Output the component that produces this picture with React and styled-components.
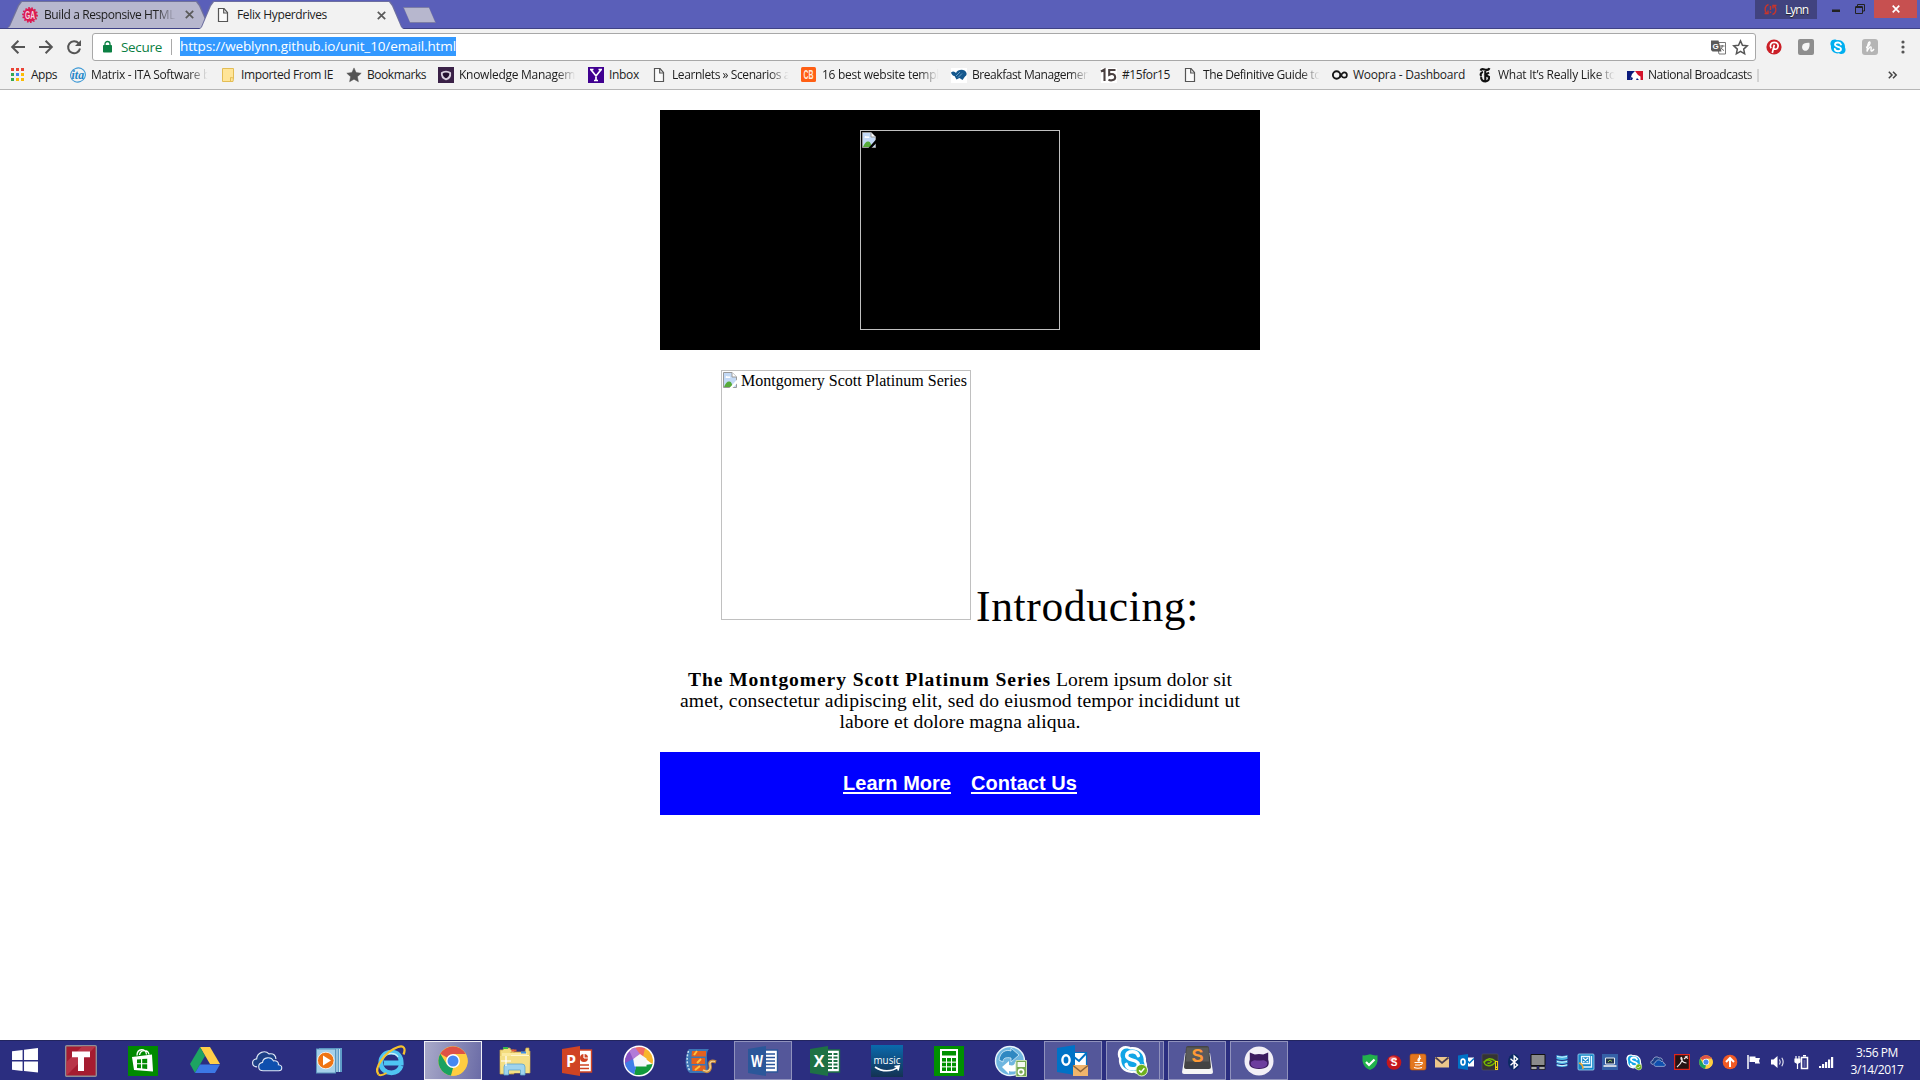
import React, { useLayoutEffect, useRef, useState } from 'react';
import styled, { createGlobalStyle } from 'styled-components';

const Global = createGlobalStyle`
  html, body { margin: 0; padding: 0; background: #fff; }
  * { box-sizing: border-box; }
  svg { display: block; flex: none; overflow: visible; }
`;

const ui = `"Open Sans", "Noto Sans", sans-serif`;
const serif = `"Liberation Serif", serif`;
const sans = `"Liberation Sans", sans-serif`;

const Screen = styled.div`
  width: 1920px;
  height: 1080px;
  display: flex;
  flex-direction: column;
  overflow: hidden;
  background: #fff;
  font-family: ${ui};
  font-size: 12px;
  color: #1c1c1c;
`;

const Run = styled.span`
  display: inline-block;
  white-space: pre;
`;

/* Tracks a line of text in or out until it fills the given width. */
function Fit({ w, children, className }) {
  const ref = useRef(null);
  const [ls, setLs] = useState(0);
  useLayoutEffect(() => {
    const el = ref.current;
    el.style.letterSpacing = '0px';
    const natural = el.getBoundingClientRect().width;
    const v = (w - natural) / Math.max(1, el.textContent.length);
    el.style.letterSpacing = `${v}px`;
    setLs(v);
  }, [w, children]);
  return <Run ref={ref} className={className} style={{ letterSpacing: ls }}>{children}</Run>;
}

/* ---------- tab strip ---------- */
const TabStrip = styled.div`
  height: 29px;
  display: flex;
  align-items: flex-start;
  padding-left: 7px;
  background: #5a5fb9;
  border-bottom: 1px solid #3f4285;
  flex: none;
`;

const Tab = styled.div`
  width: ${p => p.$w}px;
  height: ${p => (p.$active ? 28 : 27)}px;
  margin: 1px 0 -1px ${p => (p.$active ? -12 : 0)}px;
  padding-left: ${p => (p.$active ? 16 : 15)}px;
  display: flex;
  align-items: center;
  position: relative;
  z-index: ${p => (p.$active ? 2 : 1)};
  &::before, &::after {
    content: '';
    position: absolute;
    inset: 0;
    z-index: -1;
    clip-path: polygon(0 100%, 2px 93%, 11px 4px, 14px 0, calc(100% - 14px) 0, calc(100% - 11px) 4px, calc(100% - 2px) 93%, 100% 100%);
    background: ${p => (p.$active ? '#6d6fa0' : '#70719a')};
  }
  &::after {
    inset: 1px 1px 0 1px;
    background: ${p => (p.$active ? '#f2f2f2' : '#b7b7ce')};
  }
`;

const TabTitle = styled.div`
  width: ${p => p.$w}px;
  margin-left: ${p => p.$gap}px;
  line-height: 18px;
  ${p => p.$fade && 'mask-image: linear-gradient(90deg, #000 84%, transparent);'}
`;

const TabClose = styled.div`
  margin-left: ${p => p.$gap}px;
`;

const NewTab = styled.div`
  width: 33px;
  height: 16px;
  margin: 7px 0 0 -1px;
  background: #7c7da6;
  clip-path: polygon(0 0, 26px 0, 33px 100%, 7px 100%);
  &::after {
    content: '';
    display: block;
    width: 31px;
    height: 14px;
    margin: 0;
    transform: translate(1px, 1px);
    background: #b7b7ce;
    clip-path: polygon(0 0, 25px 0, 31px 100%, 6px 100%);
  }
`;

const WindowButtons = styled.div`
  margin-left: auto;
  padding-right: 3px;
  display: flex;
  height: 19px;
`;

const User = styled.div`
  width: 62px;
  height: 19px;
  background: #41437f;
  color: #fff;
  display: flex;
  align-items: center;
  padding-left: 9px;
  gap: 8px;
  line-height: 19px;
  text-shadow: 0 1px 1px #222;
`;

const WinButton = styled.div`
  width: ${p => p.$w}px;
  height: 18px;
  display: flex;
  align-items: center;
  justify-content: center;
  background: ${p => (p.$close ? '#c75050' : 'transparent')};
`;

const RestoreButton = styled(WinButton)`
  justify-content: flex-start;
`;

/* ---------- toolbar ---------- */
const Toolbar = styled.div`
  height: 33px;
  flex: none;
  display: flex;
  align-items: center;
  padding: 3px 0 0 11px;
  background: #f2f2f2;
`;

const NavIcons = styled.div`
  display: flex;
  gap: 14px;
  width: 81px;
`;

const Omnibox = styled.div`
  width: 1664px;
  height: 28px;
  border: 1px solid #a8a8a8;
  border-radius: 3px;
  background: #fff;
  display: flex;
  align-items: center;
  padding: 0 7px 0 10px;
  font-size: 13.5px;
`;

const Secure = styled.div`
  color: #0b8043;
  margin-left: 9px;
  line-height: 20px;
  padding-bottom: 1px;
`;

const Separator = styled.div`
  width: 1px;
  height: 16px;
  background: #a9a9a9;
  margin: 0 8px 0 9px;
`;

const Url = styled.div`
  height: 19px;
  line-height: 19px;
  margin-bottom: 1px;
  background: #3399ff;
  color: #fff;
  width: 276px;
`;

const OmniIcons = styled.div`
  margin-left: auto;
  display: flex;
  align-items: center;
  gap: 7px;
`;

const Extensions = styled.div`
  display: flex;
  align-items: center;
  gap: 16px;
  padding-left: 10px;
`;

const MenuButton = styled.div`
  padding-left: 7px;
`;

/* ---------- bookmarks ---------- */
const Bookmarks = styled.div`
  height: 28px;
  flex: none;
  display: flex;
  align-items: center;
  padding: 0 0 1px 10px;
  background: #f2f2f2;
  border-bottom: 1px solid #b6b6b6;
`;

const Bookmark = styled.div`
  width: ${p => p.$w}px;
  display: flex;
  align-items: center;
  gap: 5px;
`;

const BookmarkLabel = styled.div`
  width: ${p => p.$w - 31}px;
  line-height: 19px;
  padding-bottom: 1px;
  white-space: pre;
  ${p => p.$fade && 'mask-image: linear-gradient(90deg, #000 82%, transparent 98%);'}
`;

const Overflow = styled.div`
  margin-left: auto;
  padding-right: 23px;
`;

/* ---------- page ---------- */
const Page = styled.main`
  flex: 1;
  padding-top: 20px;
  display: flex;
  flex-direction: column;
  align-items: center;
  color: #000;
  font-family: ${serif};
`;

const Masthead = styled.header`
  width: 600px;
  height: 240px;
  background: #000;
  display: flex;
  justify-content: center;
  padding-top: 20px;
`;

const MissingImage = styled.div`
  width: ${p => p.$size}px;
  height: ${p => p.$size}px;
  border: 1px solid silver;
  padding: 1px;
  display: flex;
  align-items: flex-start;
  gap: 2px;
  font-size: 16px;
  line-height: 18px;
  flex: none;
`;

const Hero = styled.section`
  width: 600px;
  height: 250px;
  margin-top: 20px;
  padding-left: 61px;
  display: flex;
  align-items: flex-end;
  gap: 5px;
`;

const HeroTitle = styled.div`
  font-size: 43.5px;
  line-height: 46px;
  margin-bottom: -9px;
`;

const Copy = styled.section`
  margin-top: 49px;
  font-size: 19.6px;
  line-height: 21px;
`;

const CopyLine = styled.div`
  height: 21px;
  display: flex;
  justify-content: center;
  gap: 5px;
`;

const Footer = styled.footer`
  width: 600px;
  height: 63px;
  margin-top: 20px;
  background: #00f;
  display: flex;
  justify-content: center;
  align-items: center;
  gap: 20px;
`;

const FooterLink = styled.a`
  color: #fff;
  font: bold 20px/23px ${sans};
  & > span { text-decoration: underline; text-decoration-thickness: 2px; text-underline-offset: 2px; text-decoration-skip-ink: none; }
`;

/* ---------- taskbar ---------- */
const Taskbar = styled.div`
  height: 40px;
  flex: none;
  display: flex;
  background: #2b2e80;
  border-top: 1px solid #22255f;
`;

const StartButton = styled.div`
  width: 52px;
  display: flex;
  align-items: center;
  padding-left: 12px;
`;

const Apps = styled.div`
  display: flex;
  gap: 4px;
`;

const AppCell = styled.div`
  width: 58px;
  height: 39px;
  display: flex;
  align-items: center;
  justify-content: center;
  border: 1px solid ${p => (p.$state === 'active' ? '#f0f0f6' : p.$state === 'open' ? '#9092bd' : 'transparent')};
  background: ${p => (p.$state === 'active' ? 'linear-gradient(100deg, #a9aac9, #6a6ba6)' : p.$state === 'open' ? '#54579a' : 'transparent')};
  ${p => p.$stack && 'box-shadow: inset -3px 0 0 #54579a, inset -4px 0 0 #9092bd; padding-right: 5px;'}
`;

const Tray = styled.div`
  margin-left: auto;
  display: flex;
  align-items: center;
  gap: 8px;
  padding-top: 2px;
`;

const Clock = styled.div`
  width: 86px;
  display: flex;
  flex-direction: column;
  align-items: center;
  color: #fff;
  line-height: 17px;
  padding-top: 3px;
  font-size: 12px;
`;

/* ---------- icons ---------- */
const Svg = ({ w = 16, h, vb, children }) => (
  <svg width={w} height={h || w} viewBox={vb || `0 0 ${w} ${h || w}`} fill="none">{children}</svg>
);

const Letter = ({ x, y, s, c = '#fff', f = sans, weight = 700, style, children, tl }) => (
  <text x={x} y={y} fontSize={s} fill={c} fontFamily={f} fontWeight={weight} fontStyle={style} textAnchor="middle" textLength={tl} lengthAdjust="spacingAndGlyphs">{children}</text>
);

const FileIcon = () => (
  <Svg w={16}>
    <path d="M3.500 1.500h5.500l3.500 4v9h-9z" fill="#fafafa" stroke="#555" strokeWidth="1.200" />
    <path d="M8.700 1.500V6h4" stroke="#555" strokeWidth="1.200" />
  </Svg>
);

const CloseIcon = ({ c = '#5a5a5a', s = 9, sw = 1.7 }) => (
  <Svg w={s} vb="0 0 9 9"><path d="M.8.8l7.400 7.400M8.200.8L.8 8.200" stroke={c} strokeWidth={sw} /></Svg>
);

const GaIcon = () => (
  <Svg>
    <circle cx="8" cy="8" r="6.700" fill="#db1a52" />
    <circle cx="8" cy="8" r="7" stroke="#db1a52" strokeWidth="1.800" strokeDasharray="1.6 1.5" />
    <Letter x={8} y={11.900} s={11} tl={10}  c="#f1d4e0">GA</Letter>
  </Svg>
);

const BrokenIcon = () => (
  <Svg>
    <path d="M.5.5h8.500l4.500 4.500v10.500H.5z" fill="#c3d9f5" />
    <path d="M2.500 5.500c0-2 2-2 2.500-.8 1.500-1 2.800.3 2.300 1.300H3z" fill="#fff" />
    <path d="M1 15c1.500-4 3.500-6 5.500-5.500 2 .5 2.500 2 3 5.500z" fill="#56ab3a" />
    <path d="M.5.5h8.500l4.500 4.500v10.500H.5z" stroke="#9a9a9a" />
    <path d="M9 .5v4.500h4.500" fill="#fff" stroke="#9a9a9a" />
    <path d="M6 16.500L14.500 7v4L9 16.500z" fill="currentColor" />
  </Svg>
);

const BrokenDark = styled.div`color: #000;`;
const BrokenLight = styled.div`color: #fff;`;

const BackIcon = ({ flip }) => (
  <Svg w={14}>
    <path d={flip ? 'M0 7h12.500M6.600.8L12.800 7l-6.200 6.200' : 'M14 7H1.500M7.400.8L1.200 7l6.200 6.200'} stroke="#555" strokeWidth="2" />
  </Svg>
);

const ReloadIcon = () => (
  <Svg w={14}>
    <path d="M11.700 3.300A6 6 0 1 0 13 8.500" stroke="#555" strokeWidth="2" />
    <path d="M14 0v6H8z" fill="#555" />
  </Svg>
);

const LockIcon = () => (
  <Svg w={9} h={12}>
    <rect x="0" y="4" width="9" height="7.500" rx=".8" fill="#0b8043" />
    <path d="M2 4.500V3a2.500 2.500 0 0 1 5 0v1.500" stroke="#0b8043" strokeWidth="1.300" />
  </Svg>
);

const TranslateIcon = () => (
  <Svg w={15}>
    <path d="M5.500 2.500h9v11.500H8z" fill="#fff" stroke="#777" />
    <path d="M0 .5h7.500l3 11H1.500L0 10z" fill="#5a5a5a" />
    <Letter x={4.600} y={9} s={8} c="#fff">G</Letter>
    <path d="M9 6h4.500M11.200 5v1c0 2-1 3.500-2 4M10 7.500c.5 1.500 1.500 2.300 3 3" stroke="#666" />
  </Svg>
);

const StarIcon = ({ fill, s = 14 }) => (
  <Svg w={s} vb="0 0 16 16">
    <path d="M8 .9l2.100 4.700 5.100.6-3.800 3.500 1 5L8 12.200l-4.400 2.500 1-5L.8 6.200l5.100-.6z" fill={fill ? '#555' : 'none'} stroke="#555" strokeWidth={fill ? 0.5 : 1.600} />
  </Svg>
);

const PinterestIcon = () => (
  <Svg>
    <circle cx="8" cy="8" r="7.600" fill="#cb1f27" />
    <path d="M5.100 9.200C3.200 6.500 5 3.300 8.300 3.300c3.600 0 4.600 3.200 3.300 5.600-1 1.700-2.900 1.700-3.500.6M8.300 5.800L6.300 14" stroke="#fff" strokeWidth="1.700" />
  </Svg>
);

const GreyExtIcon = () => (
  <Svg>
    <rect width="16" height="16" rx="2" fill="#8e8e8e" />
    <path d="M4.200 7c.5-2.500 3-3.500 7.200-3.300.7 3.300-.4 7-3 8C6 12.500 3.500 10.200 4.200 7z" fill="#f5f5f5" />
  </Svg>
);

const SkypeBlob = ({ w = 16, badge, white }) => (
  <Svg w={w} vb="0 0 32 32">
    <path d="M9 1c3 0 4 .8 5 1.300C23 1 31 8 30 17c3 6-.5 13-7 13-2.500 0-4-.7-5.500-1.400C8 30 1 23 2 14-1 8 2 1 9 1z" fill={white ? '#fff' : '#00aff0'} />
    {white && <path d="M9.500 3.500c2.500 0 3.500.7 4.500 1.200C22 3.500 28.500 9.500 27.500 17c2.500 5-.5 10.500-5 10.500-2 0-3-.5-4.500-1.200C10 27.500 3.500 22 4.500 14 2 9 5 3.500 9.500 3.500z" fill="#12a5e6" />}
    <path d="M22 11c-1-3-3.500-4-6-4-3.500 0-6 1.500-6 4.200 0 5.800 12 3 12 8.800 0 3-2.500 4.500-6 4.500s-6-1.500-6.500-4.500" stroke="#fff" strokeWidth="3.600" strokeLinecap="round" />
    {badge && <><circle cx="25.500" cy="26" r="6" fill="#6eb01d" stroke="#e8f5d8" /><path d="M22.800 26l2 2 3.500-4" stroke="#fff" strokeWidth="1.500" /></>}
  </Svg>
);

const HoneyIcon = () => (
  <Svg>
    <rect width="16" height="16" rx="3" fill="#b5b5b5" />
    <path d="M4 8.500c3-1 5-5 3.500-5.500-1.500-.3-2 5-2.500 9.500 1-3 3-5 4-4.500.8.500-.8 3.500.3 4 .8.300 1.700-.5 2.700-2" stroke="#fff" strokeWidth="1.400" />
  </Svg>
);

const DotsIcon = () => (
  <Svg w={4} h={14}><circle cx="2" cy="2" r="1.600" fill="#555" /><circle cx="2" cy="7" r="1.600" fill="#555" /><circle cx="2" cy="12" r="1.600" fill="#555" /></Svg>
);

const AppsIcon = () => {
  const c = ['#ea4335', '#ea4335', '#ea4335', '#34a853', '#4285f4', '#fbbc05', '#34a853', '#fbbc05', '#fbbc05'];
  return <Svg>{c.map((f, i) => <rect key={i} x={1 + (i % 3) * 5} y={1 + Math.floor(i / 3) * 5} width="3" height="3" fill={f} />)}</Svg>;
};

const ItaIcon = () => (
  <Svg>
    <ellipse cx="8" cy="8" rx="7.500" ry="7" stroke="#3f9ad6" strokeWidth="1.100" transform="rotate(-20 8 8)" />
    <Letter x={7.800} y={11.500} s={11.500} tl={12.500} c="#2385c8" f={serif} style="italic">ita</Letter>
  </Svg>
);

const FolderIcon = () => (
  <Svg><path d="M2.500 1.500h11v9.500l-.5 3.500H2.500z" fill="#ffe598" stroke="#e3bd55" /><path d="M10.500 14.500v-4l3 .5" stroke="#e3bd55" /></Svg>
);

const KnowledgeIcon = () => (
  <Svg>
    <rect width="16" height="16" fill="#3a2147" />
    <path d="M3.800 6C6 4.200 10 4.200 12.200 6c.3 2.500-1 5.300-4.200 6.300C4.800 11.200 3.600 8.500 3.800 6z" fill="#241030" stroke="#d9d0df" strokeWidth="1.800" strokeLinejoin="round" />
  </Svg>
);

const YahooIcon = () => (
  <Svg>
    <rect width="16" height="16" fill="#400090" />
    <path d="M3 2.800L8 9l5-6.200M8 8.500v4.800M2 2.500h3.500M10.500 2.500H14M6 13.500h4" stroke="#fff" strokeWidth="1.700" />
  </Svg>
);

const CbIcon = () => (
  <Svg><rect width="15" height="15" rx="1.500" fill="#ff5f14" /><Letter x={7.500} y={11.700} s={12} tl={10} c="#ffe9dc">CB</Letter></Svg>
);

const BmaIcon = () => (
  <Svg>
    <rect width="16" height="15" y="1" fill="#fff" />
    <path d="M0 5.500c2-2 4-1 5 .5C6 3 11 2 13.500 3.500c3 2 2.500 5 .5 6L11.500 13l-3-2-3 1.500L3.500 9C1.500 9 .5 7 0 5.500z" fill="#14578d" />
    <path d="M5 9l4-4M7 10.500l4-4" stroke="#7fb0d4" strokeWidth=".8" />
  </Svg>
);

const FifteenIcon = () => (
  <Svg><rect width="16" height="15" y="1" fill="#fff" /><path d="M0 4.500l3.500-2V14M14.500 3H8.200v4.800c3-1.600 6-.5 6 2.400s-4 4-6.700 2.500" stroke="#4a4040" strokeWidth="2.100" /></Svg>
);

const WoopraIcon = () => (
  <Svg><circle cx="4.600" cy="8" r="3.700" stroke="#161616" strokeWidth="1.900" /><path d="M7.500 10.500C9 9.500 9.500 5.300 12.200 5.300c3.600 0 3.600 5.400 0 5.400-1.500 0-2.500-1.500-3-2.700" stroke="#161616" strokeWidth="1.700" /></Svg>
);

const NytIcon = () => (
  <Svg>
    <path d="M3.500 3.600C4.500.8 7 2.600 9 2.900c2 .1 3-.4 3.400-1.800M8.300 4v10M6 5C3.300 5.600 3 8.300 4.800 8.800M4.200 10c-.5 3 2 4.500 4.300 4.500 2.500-.3 3.800-2 3.500-4.500L8.500 8 12 5.500" stroke="#111" strokeWidth="2.100" />
  </Svg>
);

const MlbIcon = () => (
  <Svg>
    <rect y="4" width="16" height="9" fill="#fff" />
    <path d="M0 4h8L5 7l-2 6H0z" fill="#0b1a7c" /><path d="M8 4h8v9h-2.500V9.500L11 8z" fill="#d3132b" />
    <path d="M3 13l1-3 2 1-1 2zM9 13l1-2 2 2z" fill="#0b1a7c" />
  </Svg>
);

const SyncAlert = () => (
  <Svg w={13}>
    <path d="M4.500 1.500C1 2.500 0 7 2.500 10M0.500 10.500H4V7.500M8.500 11.500C12 10.500 13 6 10.500 3M12.500 2.500H9v3" stroke="#c9352b" strokeWidth="1.400" />
    <path d="M6.500 3v4M6.500 8.500V10" stroke="#c9352b" strokeWidth="1.400" />
  </Svg>
);

const StartIcon = () => (
  <Svg w={26} h={25} vb="0 0 27 26">
    <path d="M0 3.500l11-1.500v10.500H0zM12.500 1.800L27 0v12.500H12.500zM0 14h11v10L0 22.500zM12.500 14H27v11.500L12.500 24z" fill="#fff" />
  </Svg>
);

const TIcon = () => (
  <Svg w={32}>
    <rect x=".7" y=".7" width="30.600" height="30.600" rx="1" fill="#a51c30" stroke="#8e8e96" strokeWidth="1.400" />
    <path d="M1.500 30.500V17L17 1.500h13.500z" fill="#b93548" />
    <path d="M7 6.500h18v5.800h-6V26h-6V12.300H7z" fill="#fff" />
  </Svg>
);

const StoreIcon = () => (
  <Svg w={30}>
    <rect width="30" height="30" fill="#008a00" />
    <path d="M4 11l20-2.500 1 17L6 24z" fill="#fff" />
    <path d="M9 9.500C9 2 18 2 18.500 8.500M11.500 9C12.500 3.500 20 3 21 8.500" stroke="#fff" strokeWidth="1.300" />
    <path d="M9 13.500l4-.3v4H9zM14.200 13.100l5-.4v4.500h-5zM9 18.300h4v4l-4-.3zM14.200 18.300h5v4.700l-5-.4z" fill="#008a00" />
  </Svg>
);

const DriveIcon = () => (
  <Svg w={30} h={27}>
    <path d="M10 0h10l10 17H20z" fill="#ffcf48" /><path d="M10 0l5 9L5 26 0 17z" fill="#1da462" /><path d="M10 17.500h20L25 26H5z" fill="#3c78e6" />
  </Svg>
);

const CloudIcon = ({ w = 32 }) => (
  <Svg w={w} h={w * 0.68} vb="0 0 32 22">
    <path d="M6 17C0 17 0 9.500 5.500 9 6 2.500 14-.5 18 4c5-1 7 2 7 5" stroke="#dfe7f5" strokeWidth="1.200" fill="#1c3f86" />
    <path d="M12 21c-5.500 0-6-7.500-.5-8.500C12 7.500 20 6 22.500 11c4-.5 5.500 2 5 4 5 .5 4 6 .5 6z" fill="#0e4fae" stroke="#dfe7f5" strokeWidth="1.100" />
  </Svg>
);

const MediaIcon = () => (
  <Svg w={26}>
    <path d="M3 0h23v24H3z" fill="#5f9dc8" /><path d="M23.500 1v23M21 1v23" stroke="#d5ecf8" strokeWidth=".9" />
    <rect x=".5" y="1" width="19" height="24" fill="#a4d0ea" stroke="#5b94bb" />
    <circle cx="9.800" cy="12.500" r="8.300" fill="#ef7413" stroke="#fff" strokeWidth=".8" /><path d="M7 7.500l8 5-8 5z" fill="#fff" />
  </Svg>
);

const IeIcon = () => (
  <Svg w={30}>
    <path d="M8 17h12.500M25.200 19.800C23.500 24.500 20 26.800 15.500 26.800 9 26.800 4.800 22.500 4.800 16.500S9 6.200 15.500 6.200c6 0 9.700 4.300 9.700 10.800H9" stroke="#4fc4f2" strokeWidth="4.800" />
    <path d="M7 12c2-5 12-6.500 15-1" stroke="#c9effc" strokeWidth="1.500" />
    <path d="M2.500 28.500C-3 22 10 5 22 1c6-2 8 1.500 5.500 7.500" stroke="#f6c22d" strokeWidth="2.200" />
    <path d="M2.500 28.500c2 1.500 5.500 0 8-1.500" stroke="#f6c22d" strokeWidth="2" />
  </Svg>
);

const ChromeIcon = ({ w = 30 }) => (
  <Svg w={w} vb="0 0 30 30">
    <circle cx="15" cy="15" r="14.700" fill="#ffcd40" />
    <path d="M15 15L2.300 7.700A14.700 14.700 0 0 1 27.700 8H15z" fill="#de5246" />
    <path d="M2.300 7.700l6.600 10.800L15 22l-2 7.600A14.700 14.700 0 0 1 2.300 7.700z" fill="#1aa260" />
    <path d="M27.700 8H15l6 10.500-8 11A14.700 14.700 0 0 0 27.700 8z" fill="#ffcd40" />
    <circle cx="15" cy="15" r="6.900" fill="#fff" /><circle cx="15" cy="15" r="5.500" fill="#4688f1" />
  </Svg>
);

const ExplorerIcon = () => (
  <Svg w={32} h={30}>
    <path d="M1 4h3l1-2h6l1 2h3V28H1zM12 6h14l1-4h3v3h1v22H12z" fill="#f3dc7e" stroke="#c9a545" strokeWidth=".7" />
    <path d="M3 7h25v20H3z" fill="#fbeaa0" /><path d="M12 9h18v3H12z" fill="#fff7cf" />
    <path d="M4 2h5" stroke="#3bb54a" strokeWidth="2" /><path d="M12.500 4.500h5" stroke="#e05a3a" strokeWidth="2" /><path d="M22 6.500h5" stroke="#3d8ee6" strokeWidth="2" />
    <path d="M1 10h30l-1 17H2z" fill="#f4df86" />
    <path d="M5 29v-8q0-3 3-3h15q3 0 3 3v8h-4.500v-5h-12v5z" fill="#9ed3ee" stroke="#5ea4cc" strokeWidth=".8" />
    <path d="M7 10v10M2 15h10" stroke="#fff" strokeWidth="1.200" />
  </Svg>
);

const OfficeIcon = ({ c, ch, children, tl }) => (
  <Svg w={30}>
    <path d="M15 4h14.500v22H15z" fill="#fff" stroke={c} strokeWidth="1.400" />
    {children}
    <path d="M0 3l18-3v30L0 27z" fill={c} />
    <Letter x={9} y={20.500} s={16} tl={tl} f={ui}>{ch}</Letter>
  </Svg>
);

const PicasaIcon = () => (
  <Svg w={32}>
    <circle cx="16" cy="16" r="15.500" fill="#fff" />
    <path d="M16 16L3 22A14 14 0 0 1 6.500 6z" fill="#8a52c4" />
    <path d="M6.500 6A14 14 0 0 1 22 3.300V13L16 14z" fill="#ef6a66" />
    <path d="M6.500 6A14 14 0 0 1 12 2.600L17 9l-7 5z" fill="#b27ad8" />
    <path d="M22 3.300a14 14 0 0 1 7.600 16L20 12z" fill="#f7b52c" />
    <path d="M29.600 19A14 14 0 0 1 11 29.200L13 21z" fill="#119a3c" />
    <path d="M11 29.200A14 14 0 0 1 2.200 18l8-4 3 8z" fill="#3f7de8" />
    <path d="M17 9l6.500 4.500V21.500H11.500L10.200 14z" fill="#f4f6fa" />
  </Svg>
);

const FilmIcon = () => (
  <Svg w={32} h={26}>
    <path d="M4 1h20c-5 5 1 18-2 24H5C-2 20 1 5 4 1z" fill="#3d75b5" />
    <path d="M3.500 3c-2 6-2 14 1.500 20" stroke="#cde3f4" strokeWidth="1.500" strokeDasharray="2 1.500" />
    <path d="M7 3h14v5.500H6.500zM6.500 10H20v6H6.500zM7 17.500h13.500V23H7.500z" fill="#e4611e" />
    <path d="M9 7l3-4M12 15l4-4M10 22l5-4" stroke="#ffc13c" strokeWidth="2" />
    <path d="M18 22c6 4 8-1 7-5-1-3 1-5 6-3" stroke="#c98a3c" strokeWidth="3.200" /><path d="M18 22c6 3 8-1 7-5-.6-2.500 1-4.500 5-3.500" stroke="#f4d79b" strokeWidth="1.200" />
  </Svg>
);

const MusicIcon = () => (
  <Svg w={32}>
    <defs><linearGradient id="music" x2="0" y2="1"><stop stopColor="#0a6aad" /><stop offset="1" stopColor="#143253" /></linearGradient></defs>
    <rect width="32" height="32" fill="url(#music)" />
    <Letter x={16} y={18.500} s={11} tl={27} f={ui} weight={400}>music</Letter>
    <path d="M4 22c7 5 17 5 23 0M23.500 21.500l4.500-.5-1 4.500" stroke="#fff" strokeWidth="1.600" />
  </Svg>
);

const CalcIcon = () => (
  <Svg w={30}>
    <rect width="30" height="30" fill="#009000" /><rect x="6" y="3" width="18" height="24" fill="#fff" /><rect x="8" y="5" width="14" height="4.500" fill="#009000" />
    {[0, 1, 2].flatMap(r => [0, 1, 2].map(c => <rect key={`${r}${c}`} x={8 + c * 5} y={12 + r * 4.700} width="4" height="3.600" fill="#009000" />))}
  </Svg>
);

const SyncIcon = () => (
  <Svg w={32}>
    <circle cx="15" cy="16" r="14.500" fill="#6fb6e0" stroke="#e8f4fb" strokeWidth="1.400" />
    <path d="M4 15C5 7 11 4 16 6V3l8 7-8 7v-4c-5-1-8 0-8 4z" fill="#2f88c2" stroke="#d8edf9" strokeWidth=".8" />
    <path d="M26 17c0 8-7 11-12 9v3l-7-7 7-6v4c4 1 6 0 6-3z" fill="#fff" />
    <path d="M21 15.500h10.500v16H21z" fill="#76a850" stroke="#c7dfb5" /><path d="M22.500 17h7.500v5h-7.500z" fill="#f5f9f2" /><circle cx="26" cy="27" r="2.600" stroke="#fff" strokeWidth="1.600" />
  </Svg>
);

const OutlookIcon = () => (
  <Svg w={32} h={32}>
    <path d="M15 7.500h14.500v13H15z" fill="#fff" stroke="#0072c6" strokeWidth="1.200" /><path d="M17 12l5 4 7.500-8" stroke="#0072c6" strokeWidth="2" />
    <path d="M0 3l18-3v30L0 27z" fill="#0072c6" /><ellipse cx="9" cy="15" rx="3.600" ry="4.800" stroke="#fff" strokeWidth="2.400" />
    <path d="M16 20h15v11H16z" fill="#f0b56c" /><path d="M16 20.500l7.500 6 7.500-6" stroke="#8d643b" strokeWidth="1.500" />
  </Svg>
);

const SublimeIcon = () => (
  <Svg w={31} h={29}>
    <path d="M3 7h25l3 19q0 2-2 2H2q-2 0-2-2z" fill="#f5f5f5" />
    <path d="M4 2q0-2 2-2h19q2 0 2 2l2 19q0 2-2 2H4q-2 0-2-2z" fill="#444" />
    <path d="M4.500 1.500h22l.5 14H4z" fill="#5a5a5a" />
    <Letter x={15.500} y={15.500} s={18} c="#ff9a35">S</Letter>
  </Svg>
);

const GithubIcon = () => (
  <Svg w={30}>
    <circle cx="15" cy="15" r="14.500" fill="#f2eff7" />
    <path d="M5.800 6.500l5 2q4.200-1 8.400 0l5-2v7c2 6-1 9.500-9.200 9.500S3.800 19.500 5.800 13.500z" fill="#3b1b5e" />
    <path d="M7 16c3-3 5-1.500 8-1.500S20 13 23 16c1 4-2 6-8 6s-9-2-8-6z" fill="#6c3d9e" />
  </Svg>
);

const Shield = () => <Svg><path d="M8 .3q4 1.500 7.500 1v6Q14.500 13.500 8 16 1.500 13.500.5 7.300v-6Q4 1.800 8 .3z" fill="#22b14c" /><path d="M4 8l3 3 5.500-5.500" stroke="#fff" strokeWidth="2.200" /></Svg>;
const RedBall = () => <Svg><circle cx="8" cy="8.500" r="7.300" fill="#c3161c" /><ellipse cx="7" cy="5" rx="4" ry="2.500" fill="#ed6a64" /><Letter x={8} y={12} s={10}>S</Letter></Svg>;
const JavaTray = () => <Svg><rect width="16" height="16" rx="2" fill="#e3761f" stroke="#b75408" strokeWidth=".6" /><path d="M9 1.500c3 2-3 3-.5 6M11 4c-3 1.500-1 2-2 3.500M4.500 8.500h6c3-.5 2 2-.5 2M5 11h5M4 13.500q4 1.500 8 0" stroke="#fff" strokeWidth="1.100" /></Svg>;
const Envelope = () => <Svg><rect x="1" y="3" width="14" height="10.500" fill="#ecc68b" /><path d="M1.500 3.500L8 9l6.500-5.500" stroke="#4a3e50" strokeWidth="1.700" /></Svg>;
const OutlookTray = () => <Svg><path d="M9 3.500h7v9H9z" fill="#fff" /><path d="M9.500 7l2 2L16 4.500" stroke="#0072c6" strokeWidth="1.500" /><path d="M0 1.500L10 0v16L0 14.500z" fill="#0072c6" /><ellipse cx="5" cy="8" rx="2" ry="2.900" stroke="#fff" strokeWidth="1.600" /></Svg>;
const Nvidia = () => <Svg><rect width="16" height="16" rx="1" fill="#343434" stroke="#555" strokeWidth=".6" /><path d="M1.500 8.500Q7 1.500 14 7.500 9 13.500 4 11q-3-2-.5-4 3-2 6 .5-1.500 2.500-4 1.500" stroke="#76b900" strokeWidth="1.400" /><path d="M13 7h3v9h-3z" fill="#f6d411" /><path d="M14.500 8v4.500M14.500 14v1" stroke="#333" strokeWidth="1.100" /></Svg>;
const Bluetooth = () => <Svg><ellipse cx="8" cy="8" rx="6" ry="8" fill="#0b2a63" /><path d="M4.500 4.800l7 6.200L8.200 14V2l3.300 3-7 6.200" stroke="#fff" strokeWidth="1.400" /></Svg>;
const Screens = () => <Svg><path d="M1 .5h14v11H1z" fill="#8b8b8b" stroke="#111" /><path d="M1 12.500h6v3H1zM9 12.500h6v3H9z" fill="#a8a8a8" stroke="#111" strokeWidth=".7" /></Svg>;
const Stack = () => <Svg><path d="M2.500 1q5.500 2 11 0v4q-5.500 2-11 0zM2.500 6q5.500 2 11 0v3q-5.500 2-11 0zM2.500 10q5.500 2 11 0v2q-5.500 2-11 0z" fill="#49b5e4" /><path d="M3 2.500q5 1.500 10 0M3 7.500q5 1.500 10 0M3 11q5 1.500 10 0" stroke="#d8f5ff" /></Svg>;
const IntelTray = () => <Svg><rect width="16" height="16" rx="1" fill="#1687c9" stroke="#9ed6f1" strokeWidth=".8" /><path d="M3.500 2.500h8v7h-8zM5 4l5 4M10 4L5 8M13.500 2v11H5" stroke="#e6f7ff" strokeWidth="1.300" /><path d="M1 9q4 1 4 6" stroke="#f1a52c" strokeWidth="1.500" /></Svg>;
const Laptop = () => <Svg><rect width="16" height="16" fill="#3561a8" /><path d="M3.500 4h9v6h-9z" fill="#23344f" stroke="#e5ebf3" /><path d="M1.500 12h13" stroke="#f0f0f0" strokeWidth="1.600" /><path d="M6 8l2-2 2 1.500" stroke="#8ec44c" /></Svg>;
const PdfTray = () => <Svg><rect x=".6" y=".6" width="14.800" height="14.800" fill="#251313" stroke="#df261d" strokeWidth="1.200" /><path d="M3 13C8 9 9 5 7.500 3.500 6 3 7.500 9 12.500 9M10 5l3.500-3M11 2.500l3 2" stroke="#efe5e5" strokeWidth="1.200" /></Svg>;
const Arrow = () => <Svg><circle cx="8" cy="8" r="7.300" fill="#f15a24" /><path d="M8 13V4M4 8l4-4 4 4" stroke="#fff" strokeWidth="2" /></Svg>;
const Flag = () => <Svg><path d="M2 1v14" stroke="#fff" strokeWidth="1.500" /><path d="M3.500 2.500h6V4H14l-1 3 1 2.500H9V8H3.500z" fill="#fff" /></Svg>;
const Speaker = () => <Svg><path d="M1 5.500h2.500L7.500 2v12l-4-3.500H1z" fill="#fff" /><path d="M9.500 5.500q1.500 2.500 0 5M11.800 3.800q2.700 4.200 0 8.400" stroke="#e8e8f2" strokeWidth="1.100" /></Svg>;
const Battery = () => <Svg><path d="M7.500 3.500h6v11h-6z" stroke="#fff" strokeWidth="1.500" /><path d="M9 1.800h3" stroke="#fff" strokeWidth="1.600" /><path d="M9.500 6h2v7h-2z" fill="#fff" opacity=".25" /><path d="M1 5h5v3L3.500 9.500 1 8zM2 2v3M5 2v3M3.500 9v6" stroke="#fff" strokeWidth="1.200" fill="#fff" /></Svg>;
const Signal = () => <Svg>{[2, 4, 6, 8.500, 11].map((h, i) => <rect key={i} x={1 + i * 3} y={14 - h} width="2.200" height={h} fill="#fff" />)}</Svg>;

/* ---------- data ---------- */
const bookmarks = [
  { w: 60, text: 'Apps', fit: 26, icon: <AppsIcon /> },
  { w: 150, text: 'Matrix - ITA Software b', fit: 119, fade: true, icon: <ItaIcon /> },
  { w: 126, text: 'Imported From IE', fit: 92, icon: <FolderIcon /> },
  { w: 92, text: 'Bookmarks', fit: 59, icon: <StarIcon fill s={16} /> },
  { w: 150, text: 'Knowledge Managem', fit: 116, fade: true, icon: <KnowledgeIcon /> },
  { w: 63, text: 'Inbox', fit: 30, icon: <YahooIcon /> },
  { w: 150, text: 'Learnlets » Scenarios a', fit: 118, fade: true, icon: <FileIcon /> },
  { w: 150, text: '16 best website templ', fit: 117, fade: true, icon: <CbIcon /> },
  { w: 150, text: 'Breakfast Managemen', fit: 118, fade: true, icon: <BmaIcon /> },
  { w: 81, text: '#15for15', fit: 48, icon: <FifteenIcon /> },
  { w: 150, text: 'The Definitive Guide to', fit: 118, fade: true, icon: <FileIcon /> },
  { w: 145, text: 'Woopra - Dashboard', fit: 112, icon: <WoopraIcon /> },
  { w: 150, text: 'What It’s Really Like to', fit: 118, fade: true, icon: <NytIcon /> },
  { w: 150, text: 'National Broadcasts |', fit: 113, fade: true, icon: <MlbIcon /> },
];

const apps = [
  { icon: <TIcon /> },
  { icon: <StoreIcon /> },
  { icon: <DriveIcon /> },
  { icon: <CloudIcon /> },
  { icon: <MediaIcon /> },
  { icon: <IeIcon /> },
  { icon: <ChromeIcon />, state: 'active' },
  { icon: <ExplorerIcon /> },
  { icon: <OfficeIcon c="#d04423" ch="P"><circle cx="22" cy="12" r="4" fill="#d04423" /><path d="M22 12V7M22 12h5" stroke="#fff" strokeWidth="1.200" /><path d="M18 19h9M18 22.500h9" stroke="#d04423" strokeWidth="1.500" /></OfficeIcon> },
  { icon: <PicasaIcon /> },
  { icon: <FilmIcon /> },
  { icon: <OfficeIcon c="#2b579a" ch="W" tl={12}><path d="M18 8h9M18 11.500h9M18 15h9M18 18.500h9M18 22h9" stroke="#2b579a" strokeWidth="1.400" /></OfficeIcon>, state: 'open' },
  { icon: <OfficeIcon c="#1e7145" ch="X"><path d="M18 8h4M18 11.500h4M18 15h4M18 18.500h4M18 22h4M23.500 8h4M23.500 11.500h4M23.500 15h4M23.500 18.500h4M23.500 22h4" stroke="#1e7145" strokeWidth="2" /></OfficeIcon> },
  { icon: <MusicIcon /> },
  { icon: <CalcIcon /> },
  { icon: <SyncIcon /> },
  { icon: <OutlookIcon />, state: 'open' },
  { icon: <SkypeBlob w={31} white badge />, state: 'open', stack: true },
  { icon: <SublimeIcon />, state: 'open' },
  { icon: <GithubIcon />, state: 'open' },
];

const tray = [Shield, RedBall, JavaTray, Envelope, OutlookTray, Nvidia, Bluetooth, Screens, Stack, IntelTray, Laptop,
  () => <SkypeBlob white badge />, () => <CloudIcon w={16} />, PdfTray, () => <ChromeIcon w={14} />, Arrow, Flag, Speaker, Battery, Signal];

const TraySlot = styled.div`
  width: 16px;
  height: 16px;
  display: flex;
  align-items: center;
  justify-content: center;
`;

export default function App() {
  return (
    <Screen>
      <Global />
      <TabStrip>
        <Tab $w={204}>
          <GaIcon />
          <TabTitle $w={132} $gap={6} $fade><Fit w={131}>Build a Responsive HTML</Fit></TabTitle>
          <TabClose $gap={9}><CloseIcon /></TabClose>
        </Tab>
        <Tab $w={205} $active>
          <FileIcon />
          <TabTitle $w={92} $gap={6}><Fit w={90}>Felix Hyperdrives</Fit></TabTitle>
          <TabClose $gap={48}><CloseIcon /></TabClose>
        </Tab>
        <NewTab />
        <WindowButtons>
          <User><SyncAlert /><Fit w={23}>Lynn</Fit></User>
          <WinButton $w={38}><Svg w={8} h={2}><rect y="1.500" width="8" height="2.500" fill="#222" /></Svg></WinButton>
          <RestoreButton $w={19}><Svg w={10}><path d="M2.500 2.500V.5h7v6.500h-2M.5 3h7v6.500h-7z" stroke="#222" /><path d="M.5 3h7" stroke="#222" strokeWidth="2" /></Svg></RestoreButton>
          <WinButton $w={43} $close><CloseIcon c="#fff" s={8} sw={1.900} /></WinButton>
        </WindowButtons>
      </TabStrip>

      <Toolbar>
        <NavIcons><BackIcon /><BackIcon flip /><ReloadIcon /></NavIcons>
        <Omnibox>
          <LockIcon />
          <Secure><Fit w={41}>Secure</Fit></Secure>
          <Separator />
          <Url><Fit w={276}>https://weblynn.github.io/unit_10/email.html</Fit></Url>
          <OmniIcons><TranslateIcon /><StarIcon s={15} /></OmniIcons>
        </Omnibox>
        <Extensions><PinterestIcon /><GreyExtIcon /><SkypeBlob /><HoneyIcon /><MenuButton><DotsIcon /></MenuButton></Extensions>
      </Toolbar>

      <Bookmarks>
        {bookmarks.map(b => (
          <Bookmark key={b.text} $w={b.w}>
            {b.icon}
            <BookmarkLabel $w={b.w} $fade={b.fade}><Fit w={b.fit}>{b.text}</Fit></BookmarkLabel>
          </Bookmark>
        ))}
        <Overflow><Svg w={9} h={8}><path d="M.8.8L4 4 .8 7.200M5 .8L8.200 4 5 7.200" stroke="#444" strokeWidth="1.500" /></Svg></Overflow>
      </Bookmarks>

      <Page>
        <Masthead>
          <MissingImage $size={200}><BrokenDark><BrokenIcon /></BrokenDark></MissingImage>
        </Masthead>
        <Hero>
          <MissingImage $size={250}>
            <BrokenLight><BrokenIcon /></BrokenLight>
            <Fit w={226}>Montgomery Scott Platinum Series</Fit>
          </MissingImage>
          <HeroTitle><Fit w={223}>Introducing:</Fit></HeroTitle>
        </Hero>
        <Copy>
          <CopyLine>
            <b><Fit w={363}>The Montgomery Scott Platinum Series</Fit></b>
            <Fit w={176}>Lorem ipsum dolor sit</Fit>
          </CopyLine>
          <CopyLine><Fit w={560}>amet, consectetur adipiscing elit, sed do eiusmod tempor incididunt ut</Fit></CopyLine>
          <CopyLine><Fit w={241}>labore et dolore magna aliqua.</Fit></CopyLine>
        </Copy>
        <Footer>
          <FooterLink><Fit w={108}>Learn More</Fit></FooterLink>
          <FooterLink><Fit w={106}>Contact Us</Fit></FooterLink>
        </Footer>
      </Page>

      <Taskbar>
        <StartButton><StartIcon /></StartButton>
        <Apps>
          {apps.map((a, i) => <AppCell key={i} $state={a.state} $stack={a.stack}>{a.icon}</AppCell>)}
        </Apps>
        <Tray>
          {tray.map((Icon, i) => <TraySlot key={i}><Icon /></TraySlot>)}
        </Tray>
        <Clock><Fit w={42}>3:56 PM</Fit><Fit w={53}>3/14/2017</Fit></Clock>
      </Taskbar>
    </Screen>
  );
}
